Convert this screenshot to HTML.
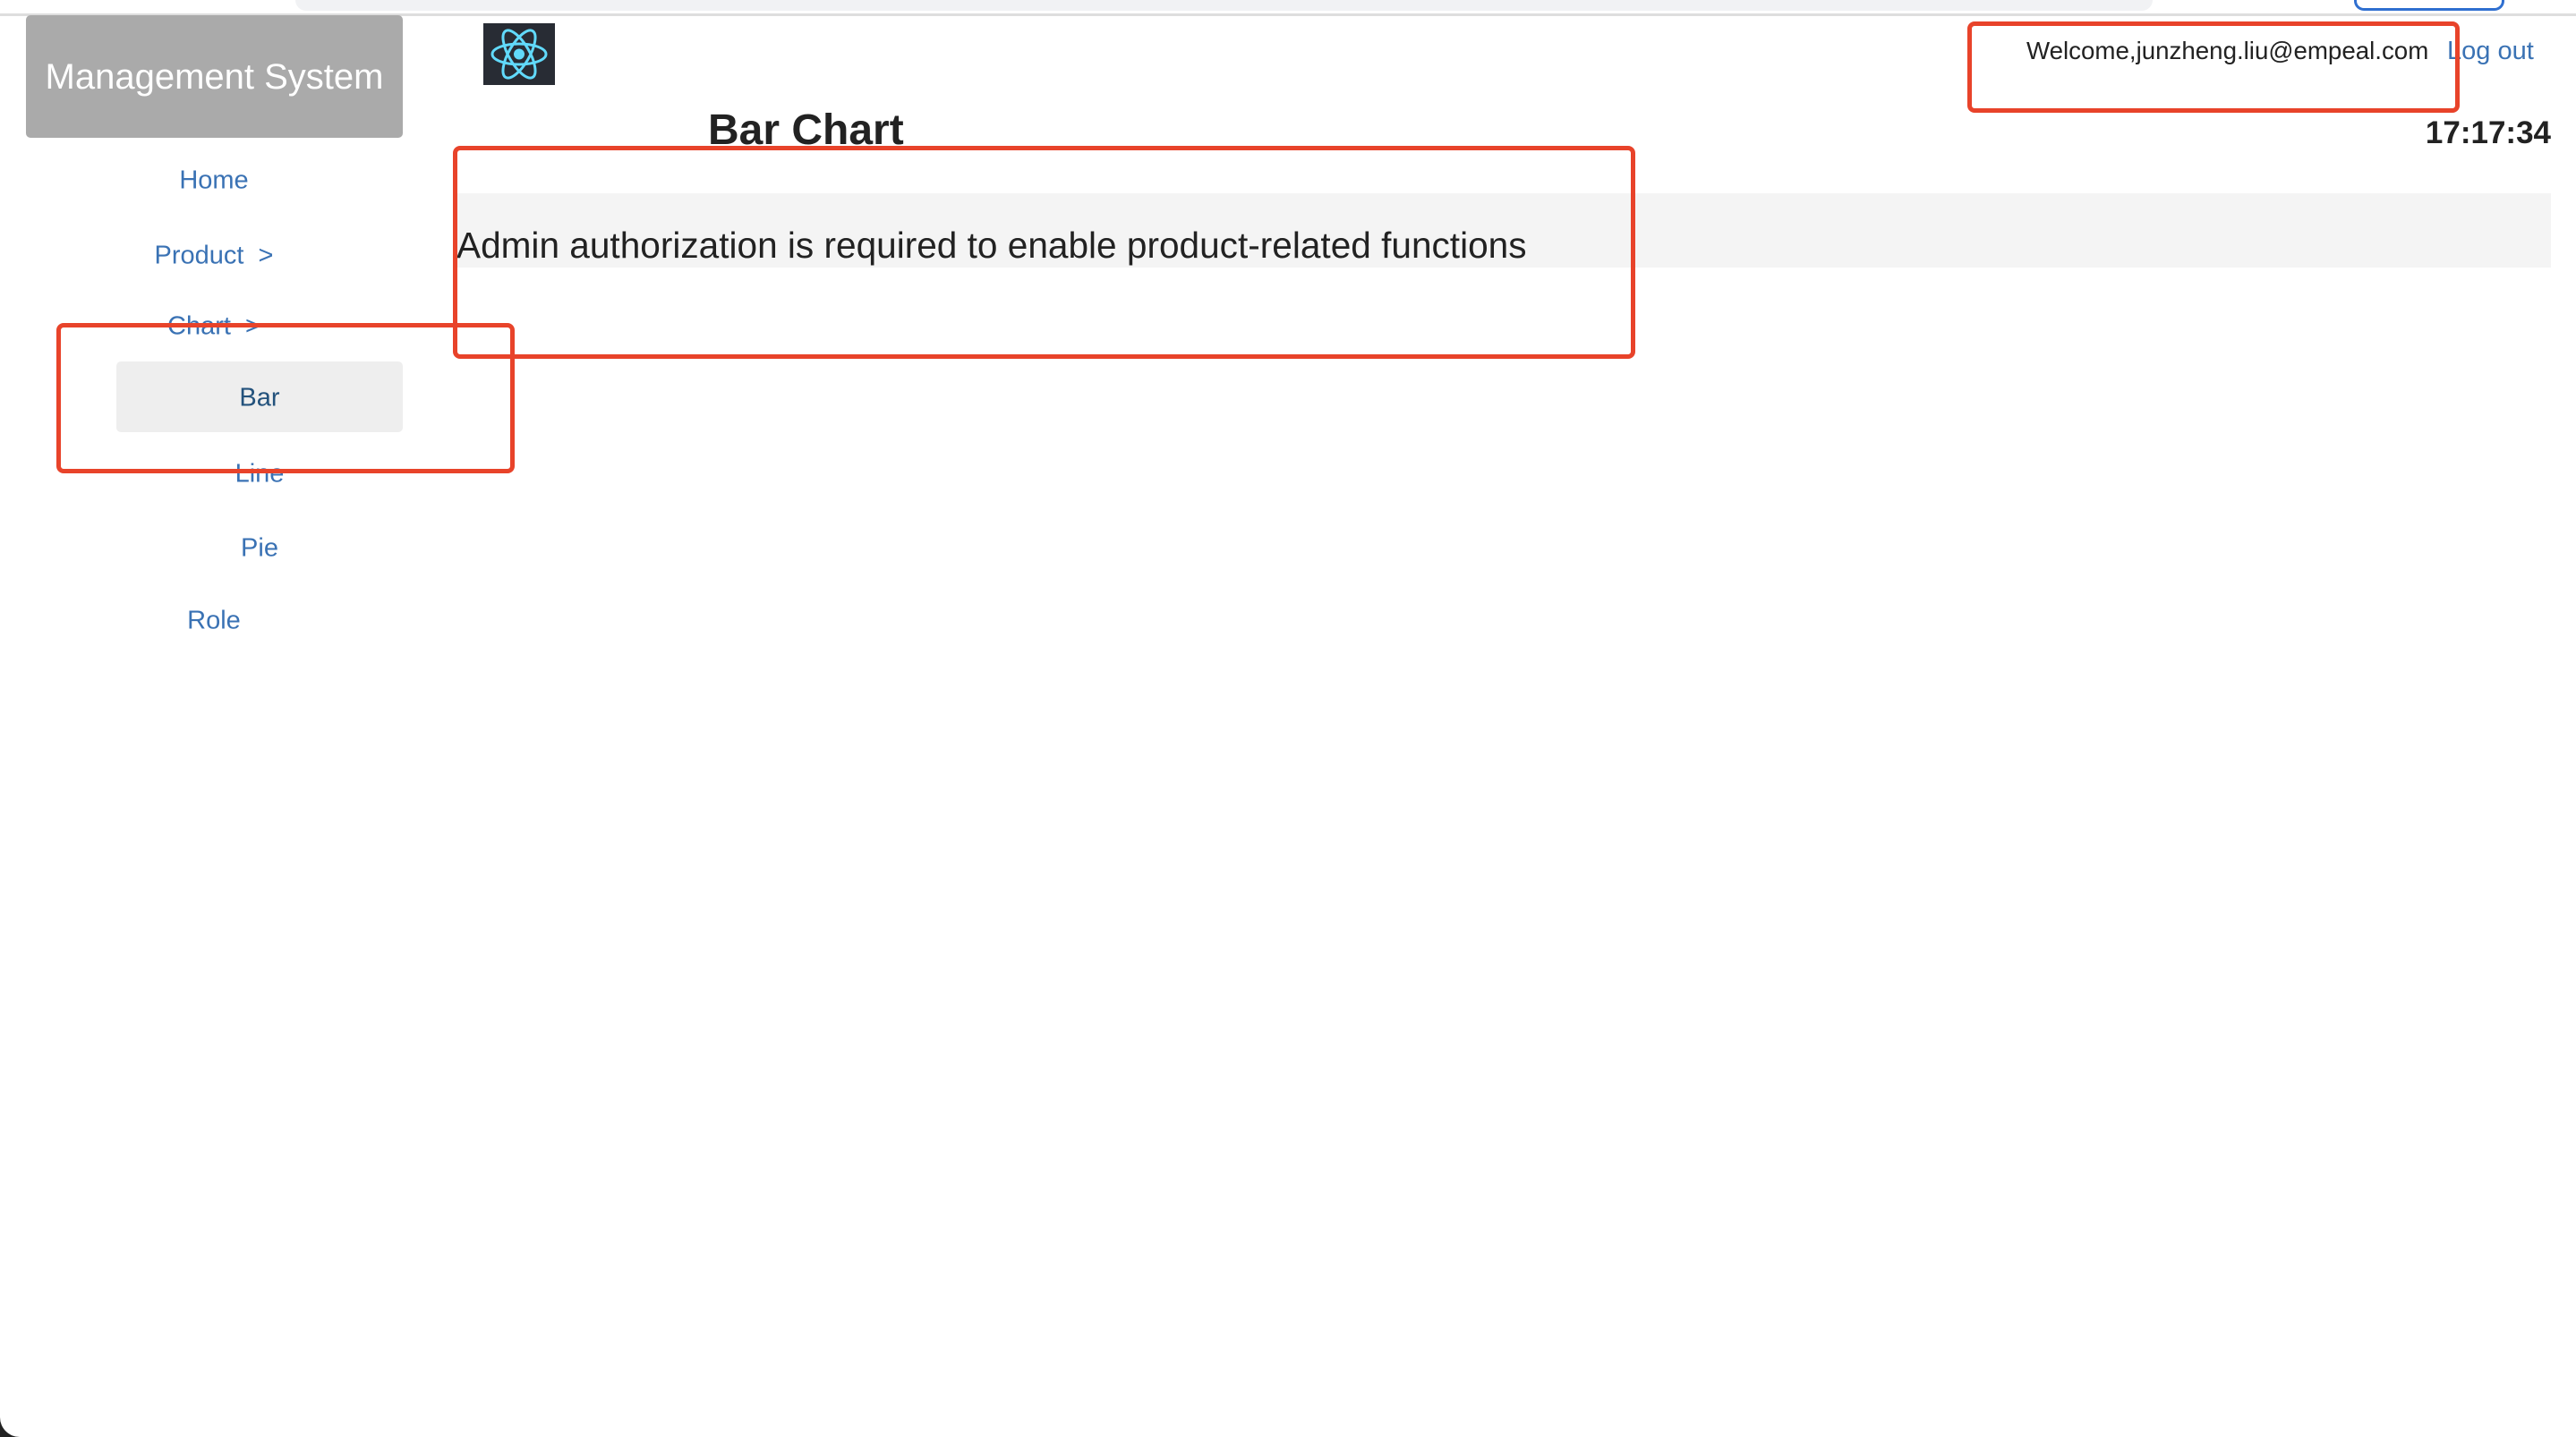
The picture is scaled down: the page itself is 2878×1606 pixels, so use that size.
<!DOCTYPE html>
<html><head><meta charset="utf-8"><style>
html,body{margin:0;padding:0;width:2878px;height:1606px;overflow:hidden;background:#fff;font-family:"Liberation Sans",Arial,sans-serif;position:relative}
.a{position:absolute;white-space:nowrap}
.nav{color:#3a72b4;font-size:29px;transform:translate(-50%,-50%)}
.red{position:absolute;border:5px solid #e8432a;border-radius:8px;box-sizing:border-box}
</style></head><body>
<div class="a" style="left:330px;top:0;width:2075px;height:12px;background:#f1f2f4;border-radius:0 0 14px 14px"></div>
<div class="a" style="left:2630px;top:-10px;width:162px;height:16px;border:3px solid #2f6fd0;border-radius:12px"></div>
<div class="a" style="left:0;top:15px;width:2878px;height:3px;background:#dedede"></div>

<div class="a" style="left:29px;top:17px;width:421px;height:137px;background:#aaa;border-radius:5px"></div>
<div class="a" style="left:29px;top:64px;width:421px;text-align:center;color:#fff;font-size:40px">Management System</div>

<div class="a nav" style="left:239px;top:202px">Home</div>
<div class="a nav" style="left:239px;top:286px">Product &nbsp;&gt;</div>
<div class="a nav" style="left:239px;top:365px">Chart &nbsp;&gt;</div>
<div class="a" style="left:130px;top:404px;width:320px;height:79px;background:#eee;border-radius:5px"></div>
<div class="a nav" style="left:290px;top:445px;color:#23527c">Bar</div>
<div class="a nav" style="left:290px;top:530px">Line</div>
<div class="a nav" style="left:290px;top:613px">Pie</div>
<div class="a nav" style="left:239px;top:694px">Role</div>

<div class="a" style="left:540px;top:26px;width:80px;height:69px;background:#282c34"></div>
<svg class="a" style="left:540px;top:26px" width="80" height="69" viewBox="0 0 80 69">
<g fill="none" stroke="#61dafb" stroke-width="3">
<ellipse cx="40" cy="34.5" rx="30" ry="11.5"/>
<ellipse cx="40" cy="34.5" rx="30" ry="11.5" transform="rotate(60 40 34.5)"/>
<ellipse cx="40" cy="34.5" rx="30" ry="11.5" transform="rotate(120 40 34.5)"/>
</g><circle cx="40" cy="34.5" r="6" fill="#61dafb"/></svg>

<div class="a" style="left:791px;top:118px;font-size:48px;font-weight:bold;color:#222">Bar Chart</div>
<div class="a" style="left:506px;top:216px;width:2344px;height:83px;background:#f4f4f4"></div>
<div class="a" style="left:510px;top:251px;font-size:40.6px;color:#222">Admin authorization is required to enable product-related functions</div>

<div class="a" style="left:2264px;top:41px;font-size:27.7px;color:#222">Welcome,junzheng.liu@empeal.com</div>
<div class="a" style="left:2734px;top:41px;font-size:29px;color:#3a72b4">Log out</div>
<div class="a" style="right:28px;top:129px;font-size:35px;font-weight:bold;color:#222">17:17:34</div>

<div class="red" style="left:506px;top:163px;width:1321px;height:238px"></div>
<div class="red" style="left:63px;top:361px;width:512px;height:168px"></div>
<div class="red" style="left:2198px;top:24px;width:550px;height:102px"></div>

<div class="a" style="left:-20px;top:1586px;width:40px;height:40px;background:#222"></div>
<div class="a" style="left:0;top:1566px;width:40px;height:40px;background:#fff;border-radius:0 0 0 22px;box-shadow:-4px 4px 0 0 #222"></div>
</body></html>
